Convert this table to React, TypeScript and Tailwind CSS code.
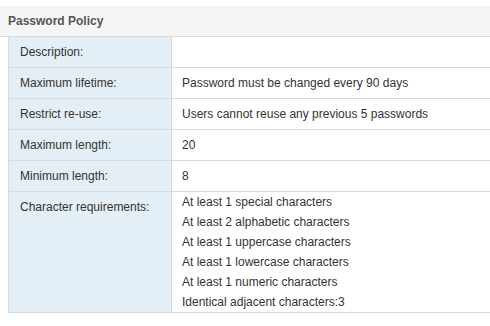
const rows: { label: string; value: string[] }[] = [
    { label: "Description:", value: [] },
    { label: "Maximum lifetime:", value: ["Password must be changed every 90 days"] },
    { label: "Restrict re-use:", value: ["Users cannot reuse any previous 5 passwords"] },
    { label: "Maximum length:", value: ["20"] },
    { label: "Minimum length:", value: ["8"] },
]

const reqs = [
    "At least 1 special characters",
    "At least 2 alphabetic characters",
    "At least 1 uppercase characters",
    "At least 1 lowercase characters",
    "At least 1 numeric characters",
    "Identical adjacent characters:3",
]

export default function App() {
    return (
        <div className="w-[490px] h-[326px] overflow-hidden bg-white text-[12px] leading-[20px] text-[#333] font-['Liberation_Sans',Arial,sans-serif]">
            <div className="mt-[6px] h-[31px] bg-[#f5f5f5] border-b border-[#d9d9d9] pl-2 flex items-center font-bold text-[#555]">
                Password Policy
            </div>
            <div className="ml-2 border-l border-b border-[#d9d9d9]">
                {rows.map((r) => (
                    <div key={r.label} className="flex h-[31px] border-b border-[#d9d9d9]">
                        <div className="w-[163px] shrink-0 bg-[#e4eef6] border-r border-[#d9d9d9] pl-[11px] flex items-center">
                            {r.label}
                        </div>
                        <div className="flex-1 pl-[10px] flex items-center">{r.value[0]}</div>
                    </div>
                ))}
                <div className="flex">
                    <div className="w-[163px] shrink-0 bg-[#e4eef6] border-r border-[#d9d9d9] pl-[11px] pt-[5px]">
                        Character requirements:
                    </div>
                    <div className="flex-1 pl-[10px]">
                        {reqs.map((t) => (
                            <div key={t}>{t}</div>
                        ))}
                    </div>
                </div>
            </div>
        </div>
    )
}
